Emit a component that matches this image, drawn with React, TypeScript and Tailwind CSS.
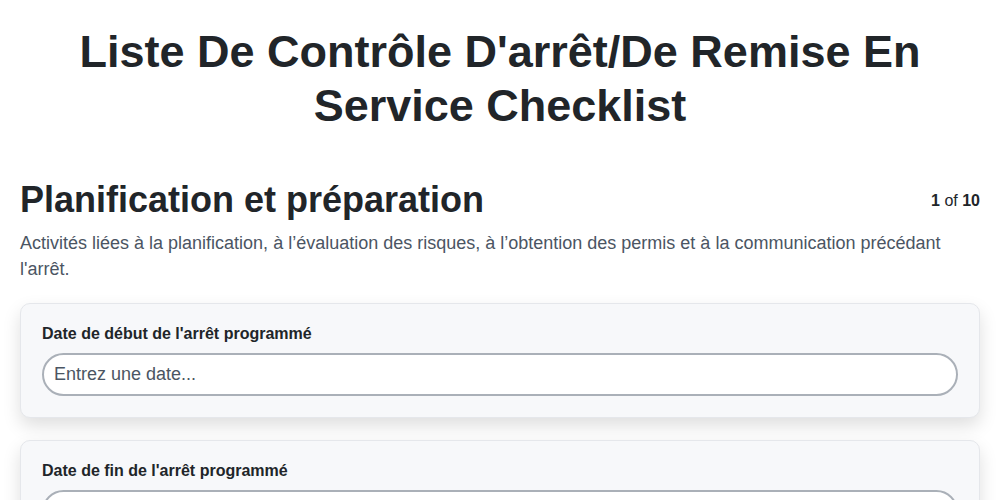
export default function App() {
  return (
    <main
      className="min-h-screen bg-white px-5 pt-[25px] text-[#212529]"
      style={{ fontFamily: '"Liberation Sans", Arial, sans-serif' }}
    >
      <h1 className="mx-auto text-center text-[45px] font-bold leading-[54px] px-10">
        Liste De Contrôle D'arrêt/De Remise En Service Checklist
      </h1>

      <section className="mt-[47px]">
        <div className="flex items-start justify-between gap-4">
          <h2 className="text-[36px] font-bold leading-10">
            Planification et préparation
          </h2>
          <div className="pt-[9px] text-[16px] text-[#212529]">
            <span className="font-bold">1</span> of{" "}
            <span className="font-bold">10</span>
          </div>
        </div>
        <p className="mt-[10px] text-[18px] leading-[26px] text-[#4b5563]">
          Activités liées à la planification, à l’évaluation des risques, à
          l’obtention des permis et à la communication précédant l'arrêt.
        </p>

        <div className="mt-[21px] space-y-[22px]">
          {[
            "Date de début de l'arrêt programmé",
            "Date de fin de l'arrêt programmé",
          ].map((label) => (
            <div
              key={label}
              className="rounded-[10px] border border-gray-200 bg-[#f7f8fa] px-[21px] pb-[21px] pt-5 shadow-[0_8px_18px_rgba(0,0,0,0.13)]"
            >
              <label className="block text-[16px] font-bold leading-5">
                {label}
              </label>
              <input
                type="text"
                placeholder="Entrez une date..."
                className="mt-[9px] h-[43px] w-full rounded-full border-2 border-[#aab0b8] bg-white px-[10px] text-[18px] text-[#212529] outline-none placeholder:text-[#4b5563]"
              />
            </div>
          ))}
        </div>
      </section>
    </main>
  );
}
